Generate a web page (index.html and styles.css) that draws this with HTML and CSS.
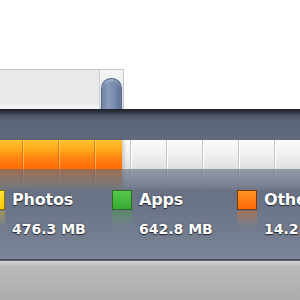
FILE: index.html
```html
<!DOCTYPE html>
<html>
<head>
<meta charset="utf-8">
<link rel="stylesheet" href="styles.css">
</head>
<body>
<div class="top">
  <div class="box">
    <div class="field"></div>
    <div class="scroll"><div class="thumb"></div></div>
  </div>
</div>
<div class="band">
  <div class="bar"><div class="fill"></div></div>
  <div class="reflect"><div class="bar mirror"><div class="fill"></div></div></div>
  <div class="legend">
    <div class="item">
      <span class="sw photos"></span>
      <div class="txt"><div class="name">Photos</div><div class="size">476.3 MB</div></div>
    </div>
    <div class="item">
      <span class="sw apps"></span>
      <div class="txt"><div class="name">Apps</div><div class="size">642.8 MB</div></div>
    </div>
    <div class="item">
      <span class="sw other"></span>
      <div class="txt"><div class="name">Other</div><div class="size">14.2 MB</div></div>
    </div>
  </div>
</div>
<div class="bottom"></div>
</body>
</html>
```
FILE: styles.css
```css
html, body {
  margin: 0;
  padding: 0;
  width: 300px;
  height: 300px;
  overflow: hidden;
  background: #ffffff;
  font-family: "DejaVu Sans", sans-serif;
}

.top {
  height: 109px;
  padding-top: 69px;
  box-sizing: border-box;
}

.box {
  display: flex;
  width: 124px;
  height: 40px;
  box-sizing: border-box;
  border-top: 1px solid #c6c6c6;
  border-right: 1px solid #c6c6c6;
}

.field {
  width: 99px;
  border-right: 1px solid #cfcfcf;
  background: linear-gradient(to bottom, #e9e9e9 0, #e9e9e9 34px, #f4f4f4 35px, #f4f4f4 100%);
}

.scroll {
  flex: 1;
  display: flex;
  flex-direction: column;
  padding: 8px 1px 0 1px;
  background: linear-gradient(to bottom, #f6f6f6, #e2e2e2);
}

.thumb {
  flex: 1;
  border-radius: 10px 10px 0 0;
  border: 1px solid #56678a;
  border-bottom: none;
  background: linear-gradient(to right, #6a7ca0 0%, #8a9bbb 30%, #7d8fb1 60%, #5e7097 100%);
  box-shadow: inset 0 2px 2px rgba(255,255,255,0.25);
}

.band {
  height: 150px;
  box-sizing: border-box;
  padding-top: 31px;
  background: linear-gradient(to bottom, #1b1d23 0px, #2f343f 3px, #505868 7px, #5c6577 11px, #606a7c 30px, #6c7588 100px, #7c8598 149px);
}

.bar {
  position: relative;
  height: 29px;
  background:
    repeating-linear-gradient(to right, transparent 0 34px, #c4c4c4 34px 35px, #ffffff 35px 36px),
    linear-gradient(to bottom, #fbfbfb 0%, #f1f1f1 50%, #e6e6e6 80%, #dedede 100%);
  background-position: -12px 0, 0 0;
}

.fill {
  position: absolute;
  left: 0;
  top: 0;
  bottom: 0;
  width: 122px;
  background:
    repeating-linear-gradient(to right, transparent 0 34px, rgba(210,90,0,0.55) 34px 35px, rgba(255,235,170,0.45) 35px 36px),
    linear-gradient(to bottom, #ffbf2e 0%, #ffad1e 30%, #ff8612 60%, #ff6a06 100%);
  background-position: -12px 0, 0 0;
  box-shadow: 2px 0 3px rgba(0,0,0,0.18);
}

.reflect {
  height: 21px;
  overflow: hidden;
}

.mirror {
  transform: scaleY(-1);
  opacity: 0.38;
  -webkit-mask-image: linear-gradient(to top, #000 0%, rgba(0,0,0,0.4) 50%, transparent 80%);
  mask-image: linear-gradient(to top, #000 0%, rgba(0,0,0,0.4) 50%, transparent 80%);
}

.legend {
  display: grid;
  grid-template-columns: 127px 125px 125px;
  margin-left: -15px;
  width: 400px;
}

.item {
  display: flex;
  align-items: flex-start;
}

.sw {
  position: relative;
  width: 20px;
  height: 20px;
  box-sizing: border-box;
  margin-right: 7px;
  flex: none;
}

.sw::after {
  content: "";
  position: absolute;
  left: -1px;
  right: -1px;
  top: 20px;
  height: 16px;
  background: inherit;
  opacity: 0.35;
  transform: scaleY(-1);
  -webkit-mask-image: linear-gradient(to top, #000, transparent);
  mask-image: linear-gradient(to top, #000, transparent);
}

.photos {
  border: 1px solid #8a7000;
  background: linear-gradient(to bottom, #ffe23a, #ffc800);
}

.apps {
  border: 1px solid #2d6b24;
  background: linear-gradient(to bottom, #55c94e, #36a830);
}

.other {
  border: 1px solid #7a3a0c;
  background: linear-gradient(to bottom, #ff9222, #ff6a08);
}

.txt {
  color: #ffffff;
  font-weight: bold;
  text-shadow: 0 1px 1px rgba(25,28,36,0.85), 0 0 2px rgba(25,28,36,0.5);
  white-space: nowrap;
}

.name {
  font-size: 16px;
  line-height: 20px;
  letter-spacing: -0.2px;
}

.size {
  font-size: 14px;
  line-height: 17px;
  margin-top: 11px;
}

.bottom {
  height: 41px;
  border-top: 1px solid #454b58;
  box-sizing: border-box;
  background: linear-gradient(to bottom, #5f6573 0px, #5f6573 1px, #d6d6d6 1px, #d0d0d0 2px, #bababa 6px, #acacac 100%);
}
```
